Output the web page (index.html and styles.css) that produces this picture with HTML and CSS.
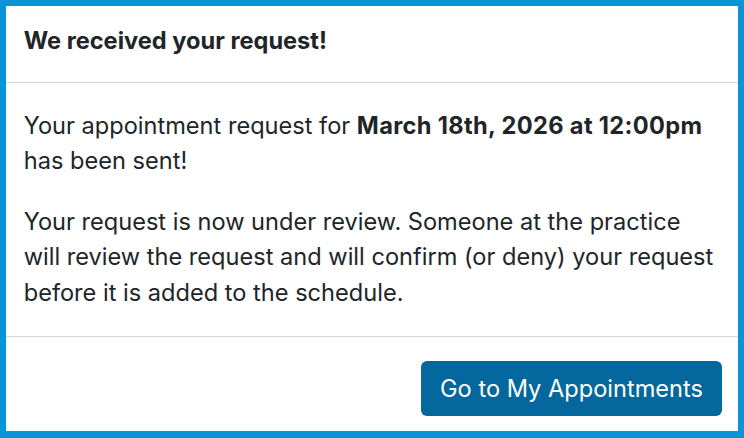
FILE: index.html
```html
<!DOCTYPE html>
<html lang="en">
<head>
<meta charset="utf-8">
<link rel="stylesheet" href="styles.css">
</head>
<body>
<div class="modal">
  <div class="modal-header">
    <h1 class="title">We received your request!</h1>
  </div>
  <div class="modal-body">
    <p>Your appointment request for <strong>March 18th, 2026 at 12:00pm</strong> has been sent!</p>
    <p>Your request is now under review. Someone at the practice will review the request and will confirm (or deny) your request before it is added to the schedule.</p>
  </div>
  <div class="modal-footer">
    <button class="btn">Go to My Appointments</button>
  </div>
</div>
</body>
</html>
```
FILE: styles.css
```css
* { box-sizing: border-box; }
html, body { margin: 0; padding: 0; }
body {
  width: 744px;
  height: 438px;
  font-family: Inter, "Noto Sans", sans-serif;
  font-size: 23.6px;
  line-height: 1.5;
  color: #212529;
  background: #fff;
}
.modal {
  height: 438px;
  border: 6px solid #0895d8;
  border-bottom-width: 7px;
  display: flex;
  flex-direction: column;
}
.modal-header {
  height: 77px;
  padding: 17px 17.7px 0;
  border-bottom: 1px solid #cdd7e1;
}
.title {
  margin: 0;
  font-size: 23.6px;
  font-weight: 700;
  line-height: 35.4px;
}
.modal-body {
  height: 254px;
  padding: 25px 17.7px 0;
  border-bottom: 1px solid #cdd7e1;
  line-height: 35.4px;
}
.modal-body p { margin: 0 0 25px; }
.modal-body strong { font-weight: 700; letter-spacing: 0.35px; }
.modal-footer {
  flex: 1;
  display: flex;
  justify-content: flex-end;
  align-items: flex-start;
  padding: 24px 16px 0;
}
.btn {
  height: 55px;
  padding: 0 19px;
  border: none;
  border-radius: 6px;
  background: #04679e;
  color: #fff;
  font-family: Inter, "Noto Sans", sans-serif;
  font-size: 23.6px;
  line-height: 35.4px;
}
```
